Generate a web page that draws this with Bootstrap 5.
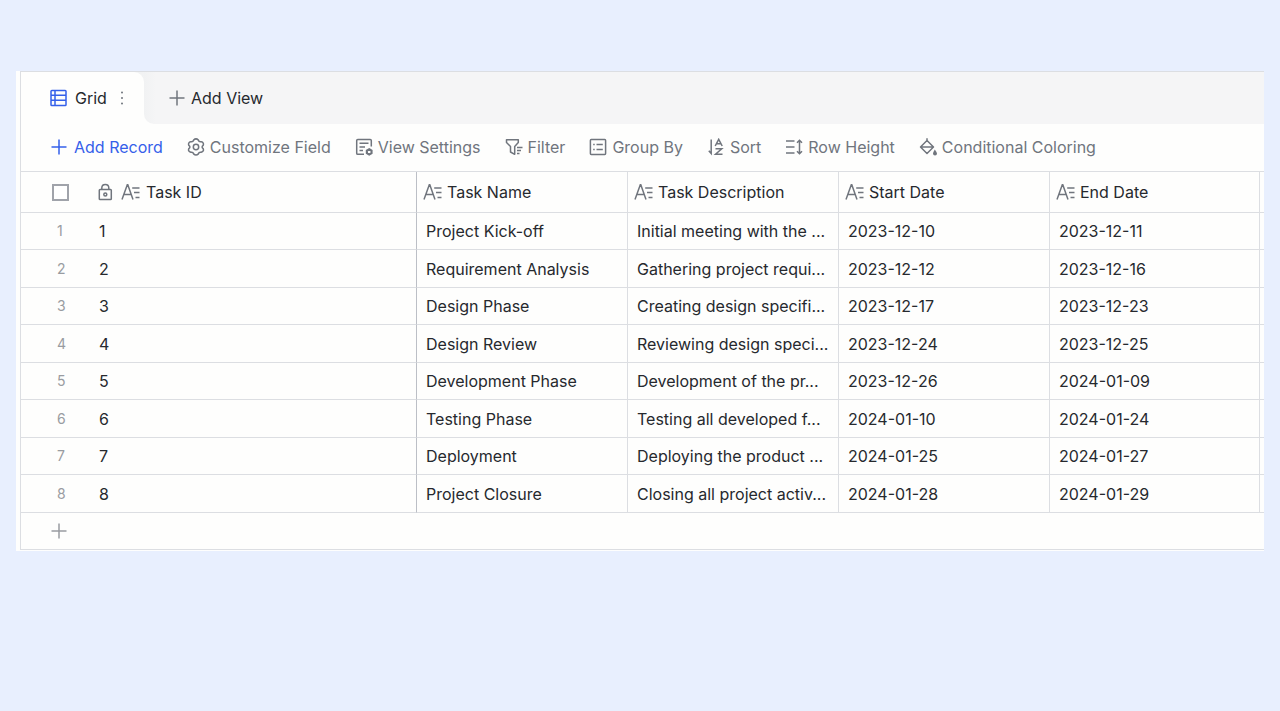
<!DOCTYPE html>
<html lang="en">
<head>
<meta charset="utf-8">
<meta name="viewport" content="width=device-width, initial-scale=1">
<title>Task Grid</title>
<link href="https://cdn.jsdelivr.net/npm/bootstrap@5.3.0/dist/css/bootstrap.min.css" rel="stylesheet">
<style>
  body { background: #e8effe; font-family: Inter, sans-serif; font-size: 16px; line-height: 24px; color: #26292e; padding: 71px 16px 0; }
  .sheet { background: #fefefd; padding-left: 4px; padding-bottom: 1px; }
  .sheet-inner { border: 1px solid #dcdee2; border-width: 1px 0 1px 1px; }
  button { border: 0; background: none; padding: 0; color: inherit; white-space: nowrap; }
  svg { display: block; flex: none; fill: none; stroke: currentColor; stroke-width: 1.5; }
  .tab-active { width: 123px; padding-left: 28px; background: #fefefd; border-radius: 0 10px 0 0; height: 52px; }
  .tab-back { background: linear-gradient(90deg, #f1f2f3 120px, #f5f5f6 140px); }
  .tab-corner { background: #fefefd; }
  .tab-rest { border-radius: 0 0 0 10px; background: linear-gradient(90deg, #f1f2f3, #f5f5f6 12px); padding-left: 24px; }
  .tool-row { height: 47px; padding: 0 0 2px 30px; gap: 24px; color: #70757d; }
  .tool-row button, .add-view { display: flex; align-items: center; gap: 5px; }
  .blue { color: #3560ea; }
  .muted { color: #70757d; }
  .faint { color: #999ca1; }
  .dots { fill: currentColor; stroke: none; }
  .grid-table { table-layout: fixed; width: 100%; border-collapse: separate; border-spacing: 0; border-top: 1px solid #dcdee2; }
  .grid-table th { height: 41px; font-weight: 400; padding: 0 6px; }
  .grid-table th, .grid-table td { border-bottom: 1px solid #dcdee2; border-right: 1px solid #dcdee2; }
  .grid-table td { height: 38px; padding: 0 9px; white-space: nowrap; }
  .grid-table tbody tr:nth-child(odd) td { height: 37px; }
  .grid-table tr > :first-child { border-right: 0; }
  .grid-table tr > :last-child { border-right: 0; padding: 0; }
  .grid-table tr > :nth-child(2) { border-right-color: #bcbfc6; }
  .grid-table .num { padding: 0 0 0 36px; font-size: 14px; }
  .grid-table .pick { padding-left: 31px; }
  .pick input { display: block; appearance: none; width: 17px; height: 17px; margin: 0; border: 2px solid #a0a3aa; background: #fff; }
  .add-row { height: 36px; padding-left: 29px; }
  .col-num { width: 69px; }
  .col-id { width: 327px; }
  .col-field { width: 211px; }
  .col-end { width: 210px; }
  .id-head { gap: 5px; }
</style>
</head>
<body>
<svg class="d-none" aria-hidden="true">
  <symbol id="plus" viewBox="0 0 18 18"><path d="M9 1.500V16.500M1.500 9H16.500"/></symbol>
  <symbol id="text" viewBox="0 0 20 18"><path d="M1 16.500L6.300 1.800h.5L12 16.500M3 11.500H10.500M11.200 5H18.500M13 9.500H18.500M14.500 14.500H18.500"/></symbol>
</svg>
<main class="sheet">
  <div class="sheet-inner">
    <div class="tab-back d-flex">
      <div class="tab-active d-flex align-items-center flex-shrink-0">
        <svg class="blue me-2" width="18" height="18" viewBox="0 0 18 18"><rect x="2" y="1.500" width="15" height="15" rx=".8"/><path d="M6 1.500V16.500M2 6.200H17M2 11.200H17"/></svg>
        <span>Grid</span>
        <button class="muted ms-2" aria-label="View options"><svg class="dots" width="14" height="18" viewBox="0 0 14 18"><circle cx="7" cy="3.500" r="1"/><circle cx="7" cy="9" r="1"/><circle cx="7" cy="14.500" r="1"/></svg></button>
      </div>
      <div class="tab-corner flex-grow-1 d-flex"><div class="tab-rest flex-grow-1 d-flex align-items-center">
        <button class="add-view"><svg class="muted" width="18" height="18"><use href="#plus"/></svg>Add View</button>
      </div></div>
    </div>
    <div class="tool-row d-flex align-items-center">
      <button class="blue"><svg width="18" height="18" viewBox="1 0 18 18"><use href="#plus" width="18" height="18"/></svg>Add Record</button>
      <button><svg width="18" height="18" viewBox="0 0 18 18"><path d="M6.600 2.100Q9 -.3 11.400 2.100Q11.800 4.200 14.200 3.800Q17.200 4.500 16.200 7.300Q14 9 16.200 10.700Q17.200 13.500 14.200 14.200Q11.800 13.800 11.400 15.900Q9 18.300 6.600 15.900Q6.200 13.800 3.800 14.200Q.8 13.500 1.800 10.700Q4 9 1.800 7.300Q.8 4.500 3.800 3.800Q6.200 4.200 6.600 2.100Z"/><circle cx="9" cy="9" r="2.700"/></svg>Customize Field</button>
      <button><svg width="18" height="18" viewBox="0 0 18 18"><path d="M9 16.300H2.800Q1.700 16.300 1.700 15.200V2.500Q1.700 1.400 2.800 1.400H15.200Q16.300 1.400 16.300 2.500V8.500M4.500 5.300H13.500M4.500 9H10M4.500 12.500H8"/><path stroke-width="2.200" d="M14.200 11.300L16.500 12.600V15.200L14.200 16.500 11.900 15.200V12.600Z"/></svg>View Settings</button>
      <button><svg width="18" height="18" viewBox="0 0 18 18"><path stroke-linejoin="round" d="M1.500 1.800H13.300V4.500L9.700 8.500V16.300L5.500 14V8.500L1.500 4.500Z"/><path d="M12 9.500H17.500M12 12.500H16M12 15.500H14.500"/></svg>Filter</button>
      <button><svg width="18" height="18" viewBox="0 0 18 18"><rect x="1.400" y="1.600" width="15.200" height="14.800" rx=".8"/><path d="M4.200 6.500H5.700M7.500 6.500H13.800M4.200 11.500H5.700M7.500 11.500H13.800"/></svg>Group By</button>
      <button><svg width="18" height="18" viewBox="0 0 18 18"><path d="M4.200 1.500V15.500L1.800 12.800M8.200 8L11.700 1.300 15.200 8M9.500 5.800H14M8.500 10.700H14.800L8.500 16.300H15.500"/></svg>Sort</button>
      <button><svg width="18" height="18" viewBox="0 0 18 18"><path d="M1 3H9.500M1 9H9.500M1 15H9.500M14.500 2V16M12 4.700L14.500 2.200 17 4.700M12 13.300L14.500 15.800 17 13.300"/></svg>Row Height</button>
      <button><svg width="18" height="18" viewBox="0 0 18 18"><path stroke-linejoin="round" d="M8 .3V2.500M8 2.500L14.500 9 8 15.500 1.500 9ZM2 9H14"/><path fill="currentColor" stroke="none" d="M15.800 11.500Q18 14.500 18 15.500A2 2 0 0 1 14 15.500Q14 14.500 15.800 11.500Z"/></svg>Conditional Coloring</button>
    </div>
    <table class="grid-table">
      <colgroup><col class="col-num"><col class="col-id"><col class="col-field"><col class="col-field"><col class="col-field"><col class="col-end"><col></colgroup>
      <thead><tr>
        <th class="pick"><input type="checkbox" aria-label="Select all records"></th>
        <th><div class="d-flex align-items-center id-head"><svg class="muted" width="20" height="18" viewBox="0 0 20 18"><rect x="3.300" y="6.500" width="12" height="10" rx=".8"/><path d="M5.800 6.500V5Q5.800 1.500 9.300 1.500T12.800 5V6.500"/><circle cx="9.300" cy="11.500" r="1.500"/></svg><svg class="muted" width="20" height="18"><use href="#text"/></svg>Task ID</div></th>
        <th><div class="d-flex align-items-center gap-1"><svg class="muted" width="20" height="18"><use href="#text"/></svg>Task Name</div></th>
        <th><div class="d-flex align-items-center gap-1"><svg class="muted" width="20" height="18"><use href="#text"/></svg>Task Description</div></th>
        <th><div class="d-flex align-items-center gap-1"><svg class="muted" width="20" height="18"><use href="#text"/></svg>Start Date</div></th>
        <th><div class="d-flex align-items-center gap-1"><svg class="muted" width="20" height="18"><use href="#text"/></svg>End Date</div></th>
        <th></th>
      </tr></thead>
      <tbody>
        <tr><td class="num faint">1</td><td>1</td><td>Project Kick-off</td><td>Initial meeting with the ...</td><td>2023-12-10</td><td>2023-12-11</td><td></td></tr>
        <tr><td class="num faint">2</td><td>2</td><td>Requirement Analysis</td><td>Gathering project requi...</td><td>2023-12-12</td><td>2023-12-16</td><td></td></tr>
        <tr><td class="num faint">3</td><td>3</td><td>Design Phase</td><td>Creating design specifi...</td><td>2023-12-17</td><td>2023-12-23</td><td></td></tr>
        <tr><td class="num faint">4</td><td>4</td><td>Design Review</td><td>Reviewing design speci...</td><td>2023-12-24</td><td>2023-12-25</td><td></td></tr>
        <tr><td class="num faint">5</td><td>5</td><td>Development Phase</td><td>Development of the pr...</td><td>2023-12-26</td><td>2024-01-09</td><td></td></tr>
        <tr><td class="num faint">6</td><td>6</td><td>Testing Phase</td><td>Testing all developed f...</td><td>2024-01-10</td><td>2024-01-24</td><td></td></tr>
        <tr><td class="num faint">7</td><td>7</td><td>Deployment</td><td>Deploying the product ...</td><td>2024-01-25</td><td>2024-01-27</td><td></td></tr>
        <tr><td class="num faint">8</td><td>8</td><td>Project Closure</td><td>Closing all project activ...</td><td>2024-01-28</td><td>2024-01-29</td><td></td></tr>
      </tbody>
    </table>
    <div class="add-row d-flex align-items-center"><button class="faint" aria-label="Add record"><svg width="18" height="18"><use href="#plus"/></svg></button></div>
  </div>
</main>
<script src="https://cdn.jsdelivr.net/npm/bootstrap@5.3.0/dist/js/bootstrap.bundle.min.js"></script>
</body>
</html>
